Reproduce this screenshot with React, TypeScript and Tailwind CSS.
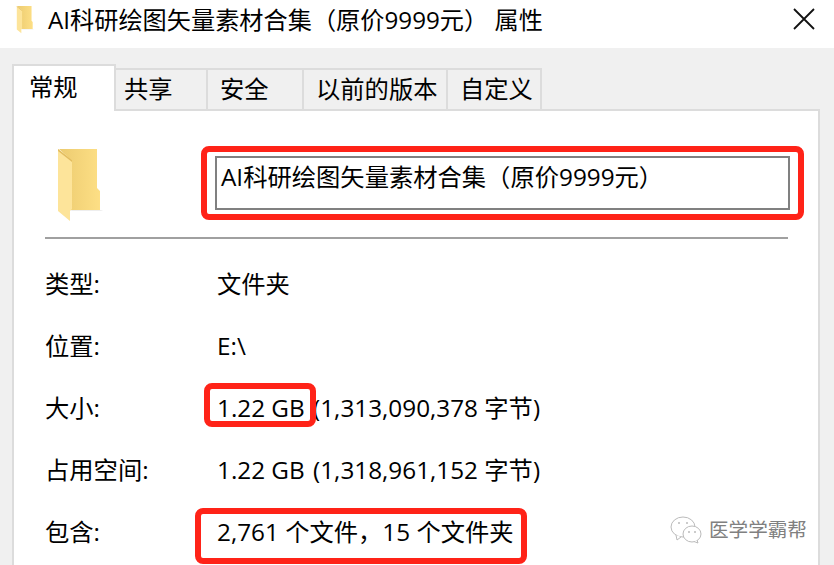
import React from "react";

const Folder = ({ className }: { className: string }) => (
  <svg viewBox="0 0 46 74" className={className}>
    <defs>
      <linearGradient id="f1" x1="0" x2="1" y1="0" y2="0">
        <stop offset="0" stopColor="#eccb70" />
        <stop offset="1" stopColor="#fddf85" />
      </linearGradient>
    </defs>
    <path d="M1 0H39V39L42 42V61H12V10Z" fill="url(#f1)" />
    <path d="M0 0L14 11V60L12 62V72L0 62Z" fill="#fde49a" />
    <path d="M0 0L14 11V13L0 2Z" fill="#e3bd60" />
    <path d="M12 62H43L45 61H14Z" fill="#eeeeee" />
  </svg>
);

const Row = ({ label, children }: { label: string; children: React.ReactNode }) => (
  <div className="flex h-[62px] items-center">
    <div className="w-[172px]">{label}</div>
    <div className="whitespace-pre">{children}</div>
  </div>
);

const Tab = ({ children, w }: { children: string; w: string }) => (
  <div className={`flex h-[41px] items-center border-t-2 border-r-2 border-[#dcdcdc] ${w}`}>{children}</div>
);

export default function App() {
  return (
    <div
      className="relative h-[565px] w-[834px] overflow-hidden bg-[#f0f0f0] text-[24.3px] leading-none text-black"
      style={{ fontFamily: '"Open Sans","Noto Sans CJK SC",sans-serif' }}
    >
      <div className="flex h-[48px] items-center bg-white pb-[8px] pl-[16px]">
        <Folder className="h-[28px] w-[19px]" />
        <div className="ml-[13px] whitespace-pre text-[24.2px]">AI科研绘图矢量素材合集（原价9999元） 属性</div>
        <svg viewBox="0 0 22 22" className="absolute left-[793px] top-[8px] h-[22px] w-[22px]">
          <path d="M1 1L21 21M21 1L1 21" stroke="#111" strokeWidth="1.8" fill="none" />
        </svg>
      </div>

      <div className="ml-[12px] mt-[16px]">
        <div className="flex h-[45px] items-end">
          <div className="z-10 -mb-[2px] flex h-[47px] w-[104px] items-start border-x-2 border-t-2 border-[#dcdcdc] border-b-0 bg-white pl-[15px] pt-[9px]">
            常规
          </div>
          <Tab w="w-[92px] pl-[8px]">共享</Tab>
          <Tab w="w-[96px] pl-[12px]">安全</Tab>
          <Tab w="w-[144px] pl-[12px]">以前的版本</Tab>
          <Tab w="w-[94px] pl-[12px]">自定义</Tab>
        </div>
        <div className="h-[460px] w-[808px] border-2 border-[#dcdcdc] bg-white pl-[31px]">
          <div className="flex h-[126px] items-start">
            <Folder className="ml-[13px] mt-[38px] h-[74px] w-[46px] shrink-0" />
            <div className="ml-[111px] mt-[45px] flex h-[54px] w-[575px] items-start border-2 border-[#808080] pl-[4px] pt-[7px] whitespace-pre">
              AI科研绘图矢量素材合集（原价9999元）
            </div>
          </div>
          <div className="h-[2px] w-[743px] bg-[#a0a0a0]" />
          <div className="pt-[14px]">
            <Row label="类型:">文件夹</Row>
            <Row label="位置:">E:\</Row>
            <Row label="大小:">
              1.22 GB<span className="ml-[2px]"> (1,313,090,378 字节)</span>
            </Row>
            <Row label="占用空间:">
              1.22 GB<span className="ml-[2px]"> (1,318,961,152 字节)</span>
            </Row>
            <Row label="包含:">2,761 个文件，15 个文件夹</Row>
          </div>
        </div>
      </div>

      <div className="absolute left-[201px] top-[146px] h-[74px] w-[603px] rounded-[8px] border-[6px] border-[#ff2318]" />
      <div className="absolute left-[204px] top-[383px] h-[44px] w-[112px] rounded-[8px] border-[6px] border-[#ff2318]" />
      <div className="absolute left-[195px] top-[508px] h-[56px] w-[332px] rounded-[8px] border-[6px] border-[#ff2318]" />

      <div className="absolute left-[670px] top-[515px] flex items-center text-[19.6px] text-[#808080]">
        <svg viewBox="0 0 32 30" className="h-[30px] w-[32px]">
          <g fill="#fff" stroke="#bbb" strokeWidth="1">
            <ellipse cx="13" cy="12" rx="12" ry="10" />
            <path d="M6 20L7 25L11 22" />
            <ellipse cx="22" cy="19" rx="9" ry="8" />
            <path d="M27 25L28 28L24 26.5" />
          </g>
          <g fill="#bbb">
            <circle cx="9" cy="8" r="1" />
            <circle cx="17" cy="8" r="1" />
            <circle cx="19" cy="17" r="1" />
            <circle cx="25" cy="17" r="1" />
          </g>
        </svg>
        <span className="ml-[7px]">医学学霸帮</span>
      </div>
    </div>
  );
}
